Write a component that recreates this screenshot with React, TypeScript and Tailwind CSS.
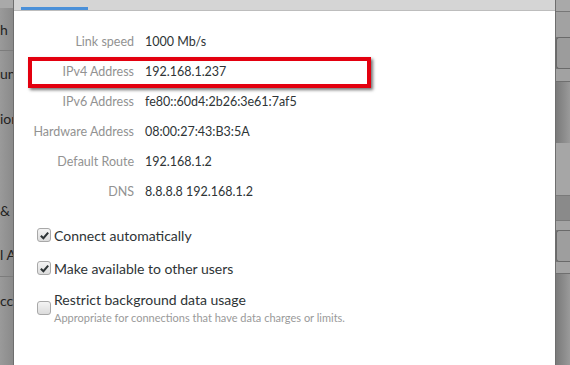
import React from "react";

const rows: [string, string][] = [
  ["Link speed", "1000 Mb/s"],
  ["IPv4 Address", "192.168.1.237"],
  ["IPv6 Address", "fe80::60d4:2b26:3e61:7af5"],
  ["Hardware Address", "08:00:27:43:B3:5A"],
  ["Default Route", "192.168.1.2"],
  ["DNS", "8.8.8.8 192.168.1.2"],
];

const Check = ({ on }: { on: boolean }) => (
  <span className="flex h-[14px] w-[14px] shrink-0 items-center justify-center rounded-[3px] border border-[#a8a8a8] bg-gradient-to-b from-[#f4f4f4] to-[#dcdcdc]">
    {on && (
      <svg width="11" height="11" viewBox="0 0 12 12">
        <path d="M2 6.2 L4.8 9 L10 2.8" fill="none" stroke="#2e3436" strokeWidth="2.2" />
      </svg>
    )}
  </span>
);

const App: React.FC = () => {
  return (
    <div className="flex h-[365px] w-[570px] overflow-hidden bg-[#8c8c8c] font-['Lato',sans-serif] text-[13px]">
      {/* dimmed window behind, left */}
      <div className="flex w-[13px] shrink-0 flex-col overflow-hidden whitespace-nowrap bg-gradient-to-r from-[#9a9a9a] to-[#8a8a8a] text-[14px] text-[#222]">
        <div className="h-[8px] bg-[#a9a9a9]" />
        <div className="flex h-[42px] items-center">h</div>
        <div className="h-px bg-[#7c7c7c]" />
        <div className="flex h-[45px] items-center">un</div>
        <div className="flex h-[45px] items-center">ior</div>
        <div className="h-[47px]" />
        <div className="flex h-[44px] items-center">&amp; L</div>
        <div className="flex h-[44px] items-center">l A</div>
        <div className="h-px bg-[#7c7c7c]" />
        <div className="flex h-[46px] items-center">cc</div>
      </div>

      {/* dialog */}
      <div className="flex w-[543px] shrink-0 flex-col border-x border-[#6e6e6e] bg-white">
        <div className="relative h-[11px] shrink-0 border-b border-[#bdbdbd] bg-[#d5d5d5]">
          <div className="absolute bottom-0 left-[7px] h-[3px] w-[67px] bg-[#4a90d9]" />
        </div>

        <div className="relative flex flex-col pt-[16px] text-[12.5px]">
          {rows.map(([k, v]) => (
            <div key={k} className="flex h-[30px] items-center">
              <div className="w-[131px] shrink-0 pr-[11px] text-right text-[#929292]">{k}</div>
              <div className="text-[#2e3436]">{v}</div>
            </div>
          ))}
          {/* annotation box */}
          <div className="absolute left-[14px] top-[46px] h-[31px] w-[343px] border-[4px] border-[#e3000f] shadow-[2px_2px_3px_rgba(0,0,0,0.55)]" />
        </div>

        <div className="flex flex-col pl-[23px] pt-[13px] text-[14px] text-[#2e3436]">
          <label className="flex h-[30px] items-center gap-[3px]">
            <Check on />
            <span>Connect automatically</span>
          </label>
          <label className="mt-[3px] flex h-[30px] items-center gap-[3px]">
            <Check on />
            <span>Make available to other users</span>
          </label>
          <div className="mt-[7px] flex items-center gap-[3px]">
            <Check on={false} />
            <div className="flex flex-col">
              <span className="leading-[20px]">Restrict background data usage</span>
              <span className="text-[11px] leading-[15px] text-[#9a9a9a]">
                Appropriate for connections that have data charges or limits.
              </span>
            </div>
          </div>
        </div>
      </div>

      {/* dimmed window behind, right */}
      <div className="flex flex-1 flex-col bg-gradient-to-r from-[#7a7a7a] to-[#9a9a9a]">
        <div className="h-[12px] border-b border-[#777] bg-[#a9a9a9]" />
        <div className="h-[25px] bg-[#a2a2a2]" />
        <div className="h-[32px] rounded-l-[3px] border border-r-0 border-[#6a6a6a] bg-[#9c9c9c]" />
        <div className="h-[12px] bg-[#a2a2a2]" />
        <div className="h-px bg-[#6f6f6f]" />
        <div className="h-[61px]" />
        <div className="h-[52px] bg-[#a6a6a6]" />
        <div className="h-px bg-[#7a7a7a]" />
        <div className="h-[24px] bg-[#8a8a8a]" />
        <div className="h-px bg-[#7a7a7a]" />
        <div className="h-[9px] bg-[#a4a4a4]" />
        <div className="h-[32px] rounded-l-[3px] border border-r-0 border-[#6a6a6a] bg-[#9e9e9e]" />
        <div className="h-[11px] bg-[#a4a4a4]" />
        <div className="h-px bg-[#6f6f6f]" />
      </div>
    </div>
  );
};

export default App;
